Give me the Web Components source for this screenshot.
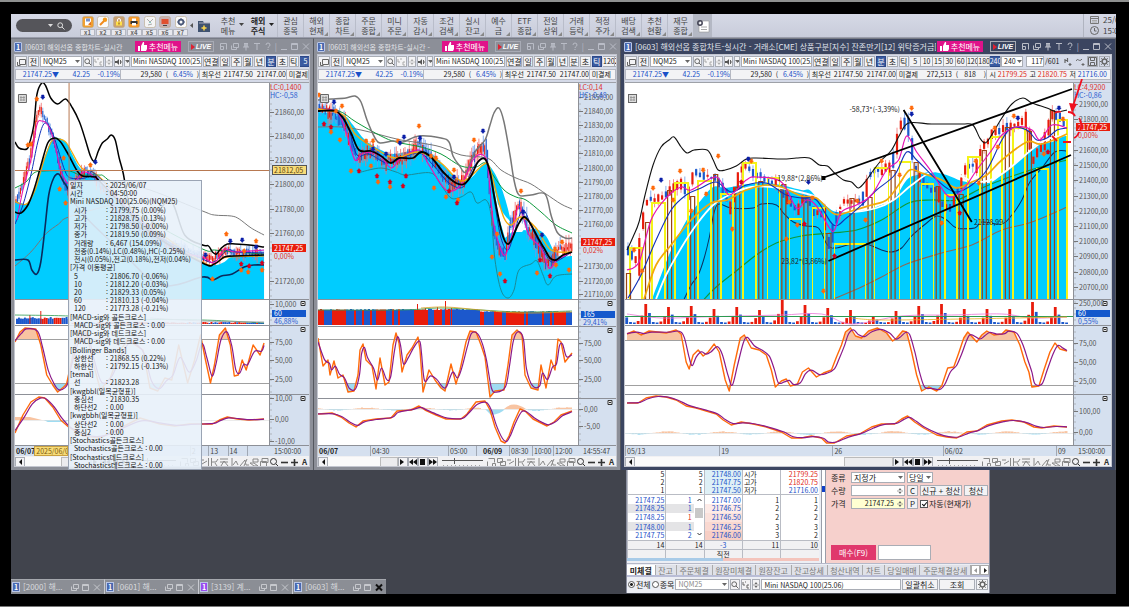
<!DOCTYPE html>
<html lang="ko">
<head>
<meta charset="utf-8">
<title>해외선옵 종합차트</title>
<style>
html{background:#000}
body{margin:0;box-sizing:border-box;min-height:100vh;border-top:2px solid #8e908f;border-bottom:1px solid #777;padding:12px 13px 12px 11px;background:#000;display:flex;flex-direction:column;
font:8px/10px "Noto Sans CJK KR",sans-serif;color:#222}
hts-desktop{flex:1}
</style>
</head>
<body>
<hts-toolbar></hts-toolbar>
<hts-desktop>
  <hts-window slot="w1" caption="[0603] 해외선옵 종합차트-실시간">
    <hts-chartbar period="분" ticks="5" active="5"></hts-chartbar>
    <hts-quote></hts-quote>
    <hts-chart kind="a"></hts-chart>
    <hts-databox slot="over"></hts-databox>
  </hts-window>
  <hts-window slot="w2" caption="[0603] 해외선옵 종합차트-실시간 -">
    <hts-chartbar period="틱" ticks="120,240"></hts-chartbar>
    <hts-quote></hts-quote>
    <hts-chart kind="b"></hts-chart>
  </hts-window>
  <hts-window slot="w3" focused caption="[0603] 해외선옵 종합차트-실시간 - 거래소[CME] 상품구분[지수] 잔존만기[12] 위탁증거금[1">
    <hts-chartbar period="분" ticks="5,10,15,30,60,120,180,240" active="240" full></hts-chartbar>
    <hts-quote full></hts-quote>
    <hts-chart kind="c"></hts-chart>
  </hts-window>
  <hts-taskbar slot="tasks"></hts-taskbar>
  <hts-order slot="order"></hts-order>
</hts-desktop>
<script>
const BASE = `<style>
*,:host{box-sizing:border-box}
:host{display:block;min-width:0}
button,input,select{font:inherit;color:inherit;margin:0;padding:0;border:1px solid #a9adb5;border-radius:0;background:#fff;min-width:0;outline:0;appearance:none}
button{background:#f3f3f5;text-align:center;white-space:nowrap;overflow:hidden}
svg{display:block}
</style>`;
const define = (name, render) => customElements.define(name, class extends HTMLElement {
  constructor(){ super(); this.attachShadow({mode:'open'}); }
  connectedCallback(){ this.shadowRoot.innerHTML = BASE + render(this); }
});
const icon = (w,h,body,extra='') => `<svg width="${w}" height="${h}" viewBox="0 0 ${w} ${h}" fill="none" stroke="currentColor" ${extra} aria-hidden="true">${body}</svg>`;
const LENS = icon(8,8,'<circle cx="3.2" cy="3.2" r="2.4"/><path d="M5 5l2.5 2.5"/>');
const DOWN = icon(5,4,'<path d="M0 0h5L2.5 3z" fill="currentColor" stroke="none"/>');
const SPIN = icon(6,8,'<path d="M1.5 3L3 1l1.5 2zM1.5 5L3 7l1.5-2z" fill="currentColor" stroke="none"/><path d="M0 4h6" stroke-width=".6"/>');
const GEAR = icon(9,9,'<circle cx="4.5" cy="4.5" r="2.4" stroke-width="1.5"/><path d="M4.5 0v1.5M4.5 7.500v1.500M0 4.500h1.500M7.500 4.500H9M1.300 1.300l1 1M6.700 6.700l1 1M1.300 7.700l1-1M6.700 2.300l1-1"/>');

/* ---------- main toolbar ---------- */
const QUICK = [
 ['#f0a030','<path d="M3 2.500h6v7H3z" fill="#fff"/><path d="M4 2.500h4v3H4z" fill="#7a92c8"/><path d="M6 8.500l3-3v4z" fill="#e07020"/>'],
 ['#fafafa','<circle cx="8" cy="3.800" r="2.200" fill="#f39a1c"/><path d="M7 5L3 9" stroke="#f08a1c" stroke-width="2"/>'],
 ['#c8a070','<path d="M3 5.500h6V9.500H3z" fill="#ffe04a"/><path d="M4.500 5.500V4a1.500 1.500 0 013 0v1.500" stroke="#fff"/><path d="M6 6.500v2" stroke="#7a4a10"/>'],
 ['#f59a2c','<path d="M2.500 5h7v3h-7z" fill="#333"/><path d="M4 2.500h4V5H4zM4 7h4v2.500H4z" fill="#fff"/>'],
 ['#f4f4f4','<path d="M3 3l3 3 3-3M4 9l4-1" stroke="#aaa"/><path d="M5.500 6l1 1" stroke="#2a9"/>'],
 ['#c8b0b0','<path d="M2.500 3h7v5h-7z" fill="#e05030"/><path d="M4 9.500h4" stroke="#444"/>'],
 ['#fafafa','<circle cx="6" cy="6" r="2.400" stroke="#4a5878" stroke-width="1.800"/><path d="M6 2v1M6 9v1M2 6h1M9 6h1" stroke="#4a5878"/>']];
const MENUS = ['관심|종목','해외|현재','종합|차트','주문|종합','미니|주문','자동|감시','조건|검색','실시|잔고','예수|금','ETF|종합','전일|상위','거래|등락','적정|주가','배당|검색','추천|현황','재무|종합'];
define('hts-toolbar', () => `<style>
:host{height:24px;background:linear-gradient(#d6d9e6,#c8ccda);color:#444;border-bottom:1px solid #9a9dab;overflow:hidden}
nav{display:flex;height:23px;align-items:stretch}
.find{display:flex;width:56px;height:13px;margin:5px 8px 0 5px;border-radius:7px;background:#55555a;color:#ddd;align-items:center;justify-content:flex-end;gap:4px;padding-right:7px}
.find input{flex:1;background:none;border:0}
.find button{background:none;border:0;width:8px;height:8px;color:#ddd}
.quick{display:flex;width:108px;justify-content:space-between;padding-top:1px;font-size:6px;line-height:5px;font-weight:bold;color:#666}
.quick button{background:none;border:0;width:15px;display:block}
.quick svg{margin:0 auto 1px}
.quick span{display:block;background:#e8e8ee;border:1px solid #b5b8c2;height:7px}
.fold{width:29px;display:flex;align-items:center;gap:4px;padding-left:1px}
.m{width:26px;border:0;border-left:1px solid #b9bdca;background:none;line-height:10px;position:relative}
.m.big{width:30px;border:0;padding-right:8px;text-align:center}
.m.b{font-weight:bold;color:#222}
.m i{position:absolute;right:1px;bottom:1px;border:2px solid transparent;border-right-color:#888;border-bottom-color:#888;width:0;height:0}
.m.big svg{position:absolute;right:3px;top:9px}
.set{width:19px;border:0;background:#b4b8c4;display:grid;place-items:center}
.when{margin-left:auto;width:33px;border-left:1px solid #b0b4c0;padding:0 0 0 6px;line-height:11px;overflow:hidden;white-space:nowrap}
.when div{display:flex;gap:4px;align-items:center;height:11px}
.when svg{flex:none}
</style><nav>
<div class="find"><input aria-label="화면 검색">${DOWN}<button aria-label="찾기">${LENS}</button></div>
<div class="quick">${QUICK.map((q,i)=>`<button>${icon(12,12,`<rect x=".5" y=".5" width="11" height="11" rx="2" fill="${q[0]}" stroke="#b9a88a" stroke-width=".6"/><g stroke="none">${q[1]}</g>`)}<span>x${i+1}</span></button>`).join('')}</div>
<div class="fold">${icon(4,7,'<path d="M4 1v5L1 3.500z" fill="#555" stroke="none"/>')}${icon(15,16,'<path d="M1 3h5l1 2h6v9H1z" fill="#3f5270" stroke="none"/><path d="M2 5h11" stroke="#aab"/><path d="M7 7.500v5M4.500 10h5" stroke="#ffd84a" stroke-width="1.500"/>')}</div>
<button class="m big">추천<br>메뉴${DOWN}</button><button class="m big b">해외<br>주식${DOWN}</button>
${MENUS.map((m,i)=>`<button class="m">${m.replace('|','<br>')}${i?'<i></i>':''}</button>`).join('')}
<button class="set" aria-label="메뉴 설정">${icon(14,14,'<path d="M4 2h9v11H3V6" fill="#fff" stroke="#999" stroke-width=".6"/><circle cx="4" cy="4" r="2.200" stroke="#445" stroke-width="1.500"/><path d="M5 8h6M5 10.500h6" stroke="#aaa"/>')}</button>
<div class="when"><div>${icon(9,9,'<path d="M.5 1.500h8v7h-8zM.5 3.500h8" stroke="#777"/><path d="M2 5.500h5M2 7h5" stroke="#aaa"/>')}25/0</div><div>${icon(9,9,'<circle cx="4.500" cy="4.500" r="4" stroke="#666"/><path d="M4.500 2v3h2" stroke="#666"/>')}15:0</div></div>
</nav>`);

/* ---------- desktop ---------- */
define('hts-desktop', () => `<style>
:host{background:#41444d;display:grid;grid-template-columns:303fr 307fr 495fr;grid-template-rows:432px 1fr;overflow:hidden}
slot{display:block;min-width:0}
.tasks{grid-column:1/3;align-self:end}
.order{padding-left:5px}
</style><slot name="w1"></slot><slot name="w2"></slot><slot name="w3"></slot><slot class="tasks" name="tasks"></slot><slot class="order" name="order"></slot>`);

const WINICONS = ['<path d="M.5 1.500h6v6M.5 1.500v6h3v-3h-3"/>','<path d="M2.500 1.500h5v4h-5zM.5 3.500v4h5v-2"/>','<path d="M2 1.500h4M1 5h6M4 5v3.500" /><path d="M3 1.500v3.500M5 1.500v3.500" stroke-width="1.600"/>','<path d="M1 1.500h6M4 1.500V8"/>','<path d="M2 3a2 2 0 114 0c0 1.500-2 1.500-2 3M4 7v1"/>'];
define('hts-window', el => `<style>
:host{height:100%;position:relative;padding:0 3px 3px;background:${el.hasAttribute('focused')?'#3b4560':'#8c8f98'};border-right:1px solid #55585f;border-top:1px solid #777b85;color:#222}
header{display:flex;align-items:center;height:15px;color:${el.hasAttribute('focused')?'#e2e5ee':'#e2e4e8'};white-space:nowrap}
b{background:#4a69b0;border:1px solid #b9c6e6;color:#fff;width:8px;height:10px;line-height:8px;text-align:center;border-radius:1px;margin-right:3px;font-size:7px;flex:none}
h2{flex:1;min-width:0;overflow:hidden;font:inherit;font-size:${el.hasAttribute('focused')?8:7}px;margin:0 1px 0 0}
.rec{background:#e0128a;border:0;color:#fff;width:46px;height:11px;display:flex;align-items:center;justify-content:center;gap:2px;flex:none}
.live{width:26px;height:11px;margin:0 6px 0 7px;flex:none;background:none;border:1px solid #a8abb5;color:#fff;font:italic bold 7px/9px "Liberation Sans",sans-serif;display:flex;align-items:center;justify-content:center;gap:1px}
.ic{display:flex;width:90px;justify-content:space-between;align-items:center;flex:none;color:#b9bcc6}
.ic button{background:none;border:0;width:8px;height:9px}
.body{background:#f3f3f5;border:1px solid #c3c6cf;height:413px;display:flex;flex-direction:column;overflow:hidden}
</style><header><b>1</b><h2>${el.getAttribute('caption')}</h2>
<button class="rec">${icon(9,9,'<path d="M0 4h2v5H0zM3 4l2-4c1 0 1.500.5 1 3h3v4l-1 2H3z" fill="#fff" stroke="none"/>')}추천메뉴</button>
<button class="live">${icon(4,6,'<path d="M0 0v6l4-3z" fill="#e02030" stroke="none"/>')}LIVE</button>
<div class="ic">${WINICONS.map((p,i)=>`<button aria-label="도구 ${i+1}">${icon(8,9,p)}</button>`).join('')}<span>|</span><button aria-label="최소화">${icon(8,9,'<path d="M1 7.500h6"/>')}</button><button aria-label="최대화">${icon(8,9,'<path d="M.5 1.500h6v6h-6zM.5 2.500h6"/>')}</button><button aria-label="닫기">${icon(8,9,'<path d="M1 1.500l6 6M7 1.500l-6 6"/>')}</button></div></header>
<div class="body"><slot></slot></div><slot name="over"></slot>`);

define('hts-chartbar', el => {
 const p=el.getAttribute('period'), t=el.getAttribute('ticks').split(','), a=el.getAttribute('active'), full=el.hasAttribute('full');
 return `<style>
:host{height:13px;flex:none;overflow:hidden;padding-top:1px;background:#d5dae8}
form{display:flex;gap:1px;height:11px;line-height:9px}
form>*{flex:none}
svg{color:#666}
button{display:grid;place-items:center}
.w12{width:12px}.w11{width:11px}.w10{width:9px}.w8{width:8px}.w6{width:6px}
.code{width:42px;display:flex;background:#fff;border:1px solid #a9adb5;align-items:center;font-size:7px}
.code input{border:0;flex:1;height:9px;padding-left:2px}.code svg{margin-right:1px}
.name{width:71px;padding-left:1px;font-size:7px}.link{width:16px}
.dim svg{color:#aaa}
.p{display:flex;gap:1px;width:79px}.p button{flex:1}
.t{display:flex;gap:1px;font-size:7px}.t button{flex:1;border-width:1px 0;box-shadow:1px 0 #a9adb5}
.on{background:#3a5aa0;color:#fff;border-color:#2c4888}
.iv{width:22px;display:flex;align-items:center;background:#fff;border:1px solid #a9adb5;font-size:7px}.iv select{border:0;flex:1;height:9px;padding-left:2px}
.cnt{width:18px;text-align:right;margin-left:2px;font-size:7px}.tot{font-size:7px;line-height:11px}
.tools{display:flex;gap:1px;margin-left:auto;padding-right:1px}.tools button{width:11px;border:0;background:none}.tools button+button+button{border:1px solid #a9adb5}
</style><form onsubmit="return false">
<button class="w12" aria-label="화면">${icon(9,8,'<path d="M2.500 1.500h6v5h-6zM.5 4v3.500h3"/>')}</button><button class="w11">전</button>
<span class="code"><input aria-label="종목코드" value="NQM25">${DOWN}</span>
<button class="w10" aria-label="검색">${LENS}</button><button class="w11 dim" aria-label="코드">${icon(9,8,'<path d="M1 1v3h2M8 4H6v3h2M3 1h2"/>')}</button><button class="w8 dim" aria-label="증감">${SPIN}</button>
<button class="w10" aria-label="소리">${icon(7,8,'<path d="M0 3h2l2-2v6L2 5H0z" fill="#555" stroke="none"/><path d="M5.500 2v4M7 4H5"/>')}</button><button class="w6" aria-label="목록">${DOWN}</button>
<input class="name" aria-label="종목명" value="Mini NASDAQ 100(25.06)"><button class="link">연결</button>
<span class="p">${[...'일주월년분초틱'].map(c=>`<button${c===p?' class="on"':''}>${c}</button>`).join('')}</span>
<span class="t" style="width:${Math.round(t.length*11.2)}px">${t.map(c=>`<button${c===a?' class="on"':''}>${c}</button>`).join('')}</span>
${full?`<span class="iv"><select aria-label="분 간격"><option>240</option></select>${DOWN}</span><input class="cnt" aria-label="표시 개수" value="117"><span class="tot">/601</span>
<span class="tools"><button aria-label="봉 추가">${icon(9,9,'<path d="M1 2v4M3.500 1v4M1 3.500h2M6 6v3M4.500 7.500h3" stroke-width="1.200"/>')}</button><button aria-label="지표 추가">${icon(9,9,'<path d="M0 4c2-4 3 2 6-2M7 6v3M5.500 7.500h3"/>')}</button><button aria-label="저장">${icon(9,9,'<path d="M.5.500h8v8h-8zM2.500.500v3h4v-3M2.500 8.500v-3h4v3"/>')}</button><button aria-label="설정">${GEAR}</button></span>`:''}
</form>`});

define('hts-quote', el => `<style>
:host{height:14px;flex:none;overflow:hidden;background:#d5dae8;padding-top:1px;font-size:7px}
div{display:flex;height:11px;line-height:9px;border:1px solid #b5b8c2;background:#f3f3f5;white-space:nowrap}
span{flex:none;text-align:right}
.blue{color:#1b50c8}.red{color:#e02818}.s{border-left:1px solid #b5b8c2}
</style><div><span class="blue" style="width:43px">21747.25▼</span><span class="blue" style="width:31px">42.25</span><span class="blue" style="width:30px">-0.19%</span>
<span class="s" style="width:42px">29,580</span><span style="width:6px">(</span><span class="blue" style="width:25px">6.45%</span><span style="width:6px">)</span><span class="s" style="width:22px">최우선</span><span style="width:32px">21747.50</span><span style="width:33px">21747.00</span><span class="s" style="width:22px">미결제</span>
${el.hasAttribute('full')?'<span style="width:34px">272,513</span><span style="width:6px">(</span><span style="width:18px">818</span><span style="width:10px">)</span><span class="s" style="width:10px">시</span><span class="red" style="width:31px">21799.25</span><span style="width:9px">고</span><span class="red" style="width:31px">21820.75</span><span style="width:9px">저</span><span class="blue" style="width:31px">21716.00</span>':''}</div>`);

/* ---------- chart drawing ---------- */
const pts = s => s.trim().split(' ').map(p=>p.split(',').map(Number));
const f = n => Math.round(n*10)/10;
function curve(P){
  let d=`M${P[0]}`;
  for(let i=0;i<P.length-1;i++){const a=P[i-1]||P[i],b=P[i],c=P[i+1],e=P[i+2]||c;
    d+=`C${f(b[0]+(c[0]-a[0])/6)} ${f(b[1]+(c[1]-a[1])/6)} ${f(c[0]-(e[0]-b[0])/6)} ${f(c[1]-(e[1]-b[1])/6)} ${c[0]} ${c[1]}`}
  return d}
const line=(s,c,w=1,x='')=>`<path d="${curve(pts(s))}" fill="none" stroke="${c}" stroke-width="${w}" ${x}/>`;
const area=(s,c,b=299)=>{const P=pts(s);return `<path d="${curve(P)}L${P.at(-1)[0]} ${b}L${P[0][0]} ${b}Z" fill="${c}"/>`};
const at=(P,x)=>{for(let i=1;i<P.length;i++)if(x<=P[i][0]){const a=P[i-1],b=P[i];return a[1]+(b[1]-a[1])*(x-a[0])/(b[0]-a[0])}return P.at(-1)[1]};
function rng(a){return()=>{a=a+0x6D2B79F5|0;let t=Math.imul(a^a>>>15,1|a);t=t+Math.imul(t^t>>>7,61|t)^t;return((t^t>>>14)>>>0)/4294967296}}
const RED='#e81c0c',BLUE='#1c58cc';
function candles(s,step,w,amp,seed){
  const P=pts(s),r=rng(seed);let o='';
  for(let x=P[0][0];x<=P.at(-1)[0];x+=step){
    const y=at(P,x),next=at(P,x+step),up=next<y-.5?r()<.8:next>y+.5?r()<.2:r()<.5,h=Math.abs(next-y)*.8+amp*(.15+r()*.7),t=y-h/2+(r()-.5)*amp*.5;
    const c=up?RED:BLUE;
    o+=`<path d="M${f(x)} ${f(t-amp*r()*.7)}V${f(t+h+amp*r()*.7)}" stroke="${up?'#f07070':'#6a9ae8'}" stroke-width=".8"/><path d="M${f(x)} ${f(t)}V${f(t+h)}" stroke="${c}" stroke-width="${w}"/>`}
  return o}
function marks(s,c,dir){return pts(s).map(([x,y])=>`<path transform="translate(${x} ${y})${dir<0?' scale(1 -1)':''}" d="M0-2.500L2.200 0H1.200V2H-1.200V0H-2.200Z" fill="${c}" stroke="${c}" stroke-width=".5"/>`).join('')}
const CR='#d8001c';
function osc(s,hi,lo,id,dx=1.5){
  const P=pts(s),Q=P.map((p,i)=>{const a=P[i-1]||p,b=P[i+1]||p;return [f(Math.min(p[0]+(i?dx:0),P.at(-1)[0])),f(a[1]*.2+p[1]*.66+b[1]*.14)]});
  const d='M'+P.map(p=>p.join(' ')).join('L'),e=y=>`${d}L${P.at(-1)[0]} ${y}L${P[0][0]} ${y}Z`;
  return (hi?`<clipPath id="h${id}"><path d="M0 300H1200V${hi}H0z"/></clipPath><clipPath id="l${id}"><path d="M0 ${lo}H1200V460H0z"/></clipPath>
<path d="${e(hi)}" fill="#f8c4a2" clip-path="url(#h${id})"/><path d="${e(lo)}" fill="#9fdcf2" clip-path="url(#l${id})"/><path d="M0 ${hi+.5}H1200M0 ${lo+.5}H1200" stroke="#a0a0a0"/>`:'')
  +`<path d="${d}" fill="none" stroke="#ff6a0a" stroke-width="1.400" stroke-linejoin="round"/><path d="${curve(Q)}" fill="none" stroke="#8a1a8a" stroke-width="1.200"/>`}
function hist(x0,x1,y,seed,amp,step=2){const r=rng(seed);let o='',v=0;for(let x=x0;x<x1;x+=step){v=Math.sin(x/9+seed)*amp*(.6+.5*r());o+=`<path d="M${f(x)} ${y}v${f(-v)}" stroke="${v>0?'#f8c4a2':'#9fdcf2'}" stroke-width="${step}"/>`}return o}
function vol(x0,x1,base,h,v,seed,w){const r=rng(seed);let o='',c=RED;for(let x=x0;x<x1;x+=w){if(r()<.55)c=r()<.52?RED:BLUE;const y=h+r()*v;o+=`<path d="M${x+w/2} ${base}v${f(-y)}" stroke="${c}" stroke-width="${w}"/>`}return o}
const frame=(x0,x1,ys)=>`<path d="${ys.map(y=>`M${x0} ${y+.5}H${x1}`).join('')}" stroke="#8d9097"/>`;
const box=(x,y)=>`<path d="M${x+.5} ${y+.5}h8v8h-8z" fill="#ddd" stroke="#666"/><path d="M${x+2} ${y+3.500}h5M${x+2} ${y+6}h5M${x+3} ${y+2}v5M${x+6} ${y+2}v5" stroke="#888" stroke-width=".7"/>`;

const CH={};
CH.a={x0:14,w:256,ax:40,panes:[299,325,394],svg(){return `
${area('14,200 20,203 27,203 35,187 43,160 51,140 58,138 66,143 72,155 78,166 84,172 92,175 98,180 120,200 160,235 203,262 216,265 225,262 235,256 265,256','#00ccff')}
${line('14,266 30,252 45,234 58,224 68,217 110,205','#777',1)}
${candles('15,200 20,192 26,170 31,150 36,118 40,108 46,122 52,135 58,160 63,182 68,192 75,180 85,170 95,178 120,215 160,240 203,258 215,258 228,251 240,253 265,252',1.5,1,9,77)}
${line('14,260 27,260 31,270 36,274 40,262 44,230 48,195 53,178 58,174 63,182 67,188 72,200 90,222 120,250 160,285 203,277 213,280 222,276 233,274 245,267 255,265 265,265','#0a2a5c',1.6)}
${line('14,188 25,182 33,173 43,171 68,171 80,175 98,175 108,180 150,220 203,249 215,250 235,252 265,254','#0c9a3c',1)}
${line('14,201 20,204 27,203 35,188 43,161 51,141 58,139 66,143 78,164 84,170 98,176 150,225 203,262 216,263 228,257 265,256','#f2a80c',1.2)}
${line('14,224 22,205 30,175 37,142 43,124 49,127 56,145 64,170 70,178 85,178 95,174 150,230 203,259 216,261 228,250 238,252 265,253','#1030b8',1)}
${line('16,220 22,190 30,160 36,125 41,121 47,125 53,140 60,170 68,184 76,180 90,174 140,220 175,250 203,257 215,263 225,249 235,252 265,250','#e614b4',1.1)}
${line('14,142 18,148 26,149 29,142 33,125 36,95 41,83 45,86 50,98 57,104 65,99 72,108 79,122 85,140 90,156 94,161 98,151 102,143 107,139 111,135 115,140 119,158 123,173 128,200 135,225 150,225 170,200 185,235 203,245 209,246 213,252 217,254 222,248 228,244 236,244 250,245 265,247','#000',1.5)}
${line('14,212 20,213 27,205 33,190 40,166 47,143 54,138 60,142 68,155 76,170 82,176 95,177 100,182 150,232 203,263 215,264 225,257 235,256 265,255','#000',1.6)}
${line('108,180 150,190 203,211 215,215 232,216 240,219 252,228 265,235','#777',1)}
${marks('36,99 30,144 27,145 63,158 59,189 90,165 65,203 213,279 242,270 227,234 257,241 245,251 263,270 249,272','#ff6a0a',1)}${marks('42,97 95,162 206,255 231,241 243,240 257,247','#0a1ea8',-1)}${marks('242,264 263,263 250,266',CR,1)}
${box(17,94)}
${vol(71,265,324,1,1,3,2)}${vol(15,69,324,5,2,9,2)}<path d="M40 324v-13M29 324v-9" stroke="${RED}"/>${line('14,315 68,316 110,319 203,320 265,323','#2c9a50',.8)}${line('150,318 203,321 265,322','#999',.8)}
${osc('14,342 19,332 24,328 35,329 40,345 46,375 52,385 57,392 63,387 66,384 69,370 78,330 86,332 92,360 100,390 110,378 120,350 128,340 135,345 143,350 150,388 158,391 165,378 172,380 179,345 188,383 195,360 201,335 206,360 211,383 215,365 220,335 226,328 231,345 235,376 239,375 243,360 247,370 254,345 261,355 265,343',339,383,'a')}
<path d="M14 420v-3h15l12 3z" fill="#f8c4a2"/><path d="M43 420l4 2h18l4-2z" fill="#9fdcf2"/><path d="M14 420.500H270" stroke="#ddd" stroke-width=".6"/>
${osc('14,433 22,415 30,402 38,397 44,398 52,407 60,420 68,427 82,436 100,438 120,428 140,418 160,424 175,426 190,424 202,424 213,424 220,420 228,417 238,419 250,420 265,419')}
<path d="M68.500 83V445M14 170.500H270" stroke="#b87850"/>`},
 axis:[['21860,00',112],['21840,00',136],['21820,00',160],['21800,00',184],['21780,00',209],['21760,00',233],['21720,00',281],['10,000',304],['75,00',342],['50,00',360],['25,00',379],['10,00',398],['0,00',419],['-10,00',441]],
 lc:'LC:0,1400',hc:'HC:-0,58',red:248,pct:['0,00%',256],vb:['60',313,'46,88%'],cross:170,time:'15:00:00',
 dates:[[21,'06/07',1],[37,'2025/06/07',2],[132,''],[20,'2'],[21,'13'],[21,'14'],[24,'']],thumb:30};
CH.b={x0:317,w:260,ax:38,panes:[299,326,398],svg(){return `
${area('317,112 342,115 352,125 364,140 380,150 392,154 418,150 432,155 445,168 458,180 470,178 484,163 490,170 500,195 510,222 523,230 535,229 545,236 556,255 571,256','#00ccff')}
<path d="M491 172L497 214 504 238 511 232 521 232 526 226 518 205 509 222Z" fill="#fff"/><path d="M488 165Q501 180 510 222Q502 215 497 204Z" fill="#00ccff"/>
${candles('317,108 335,114 345,128 352,150 356,156 372,152 385,163 395,158 403,160 418,144 430,158 440,172 450,185 463,180 472,158 480,148 486,150 488,185 492,225 498,250 504,255 511,220 519,202 527,228 535,240 545,262 550,262 557,250 571,248',1.45,1,13,2)}
${line('360,172 380,168 395,172 405,175 430,173 440,185 450,198 460,197 470,192 476,203 485,200 490,215 494,260 500,290 507,298 513,290 518,270 530,264 536,261 542,275 547,285 555,276 571,274','#1c8a96',1)}
${line('317,127 340,127 360,130 380,135 400,140 420,143 440,147 460,155 480,157 490,160 500,170 515,178 530,184 545,194 560,204 571,209','#777',1)}
${line('317,109 338,111 355,122 380,136 395,142 420,147 440,154 460,166 475,167 484,163 492,175 503,190 515,197 525,200 540,212 555,225 571,233','#0c9a3c',1)}
${line('317,100 331,99 345,98 354,96 360,102 366,120 374,138 379,143 392,141 402,142 418,136 440,138 448,142 452,156 458,165 465,172 474,152 484,140 489,125 493,113 498,108 503,122 509,155 513,180 518,195 530,195 544,194 550,215 556,232 564,238 571,238','#777',1.5)}
${line('317,110 338,112 348,130 356,155 368,154 385,163 395,160 418,153 432,165 448,183 462,187 472,168 482,158 488,168 494,205 500,238 507,250 514,230 522,210 532,230 545,255 553,262 571,252','#1030b8',1)}
${line('317,109 336,112 346,135 354,160 362,153 378,155 390,168 400,158 418,150 428,165 445,190 460,185 472,160 482,155 487,168 492,220 500,250 505,254 511,235 518,206 528,235 540,248 548,268 556,260 571,252','#e614b4',1.2)}
${line('317,109 342,115 355,135 380,152 395,158 418,152 440,163 455,178 465,180 482,165 488,166 496,195 503,218 510,225 520,217 535,228 550,250 571,252','#f2a80c',1.4)}
${line('317,111 334,111 342,118 350,133 358,150 370,151 380,156 390,163 398,158 412,158 420,152 430,157 443,173 455,183 463,184 470,176 477,162 484,159 489,172 493,195 499,225 503,239 507,244 511,239 517,225 523,217 529,223 537,238 543,248 549,258 555,260 562,255 571,252','#000',1.8)}
${marks('318,95 341,106 335,111 418,126 365,141 372,141 397,141 473,140 520,191 430,156 435,158 350,171 330,132 370,166 377,182 389,187 339,140 433,188 445,197 453,170 457,200 491,257 499,274 496,234 561,242 555,265 568,270 554,249 536,273','#ff6a0a',-1)}${marks('333,102 326,101 403,137 419,138 399,143 385,154 482,131 522,212 453,177 541,235 372,149','#0a1ea8',-1)}${marks('323,124 330,127 358,171 376,176 389,182 405,176 402,186 448,191 456,203 504,281 539,260 549,276',CR,1)}
${box(319,94)}
${vol(317,479,325,15,1,21,2)}${vol(479,571,325,13,1,12,2)}<path d="M416.500 325v-21M444.500 325v-24M424.500 325v-17M450.500 325v-17M436.500 325v-18" stroke="${RED}"/>${line('317,310 400,310 440,308 480,310 520,312 571,311','#2c9a50',.8)}${line('420,308 445,307 480,310 520,313 571,312','#d8a020',.8)}
${osc('317,338 322,366 327,360 329,375 333,361 337,378 342,375 347,392 353,391 357,375 359,350 362,344 365,360 371,366 375,389 379,358 384,385 388,382 392,345 395,333 398,343 401,372 406,355 411,348 417,337 419,350 422,392 428,370 434,380 440,388 444,391 450,364 455,384 459,370 465,342 469,331 475,332 480,345 484,357 489,397 494,391 503,390 507,365 511,335 516,330 521,335 524,375 530,388 537,390 540,365 545,388 550,360 554,370 557,339 560,342 564,362 571,353',339,383,'b')}
${hist(317,480,409,5,1.5)}<path d="M484 409L490 415Q500 414 504 409Z" fill="#9fdcf2"/><path d="M503 409Q512 400 525 409Z" fill="#f8c4a2"/>${hist(526,571,409,8,2)}<path d="M317 409.500H577" stroke="#ddd" stroke-width=".6"/>
${osc('317,414 331,413 340,417 348,423 355,427 362,421 375,419 390,418 396,411 410,410 418,406 424,410 435,415 445,419 460,419 466,414 475,402 484,401 489,410 494,427 500,441 504,443 508,436 513,422 519,409 524,411 532,419 540,423 546,426 553,422 560,415 571,411')}`},
 axis:[['21850,00',97],['21840,00',111],['21830,00',125],['21820,00',139],['21810,00',153],['21800,00',168],['21790,00',182],['21780,00',196],['21770,00',210],['21760,00',224],['21730,00',266],['21720,00',281],['21710,00',294],['75,00',343],['50,00',360],['25,00',379],['0,00',409],['-5,00',426]],
 lc:'LC:0,14',hc:'HC:-0,48',red:242,pct:['0,02%',250],vb:['165',314,'29,41%'],time:'14:55:47',
 dates:[[52,'06/07',1],[78,'04:30'],[28,'05:00'],[6,''],[27,'06/09',1],[23,'08:30'],[21,'10:00'],[25,'12:00']],thumb:18};
CH.c={x0:624,w:447,ax:38,panes:[299,325,394],svg(){
 const br='626,273 645,222 667,190 690,196 713,174 735,187 758,181 781,184 803,197 826,233 849,198 867,197 890,170 913,162 935,186 958,194 981,150 1004,127 1026,131 1049,110';
 const ye='629,248,12 651,203,13 674,183,13 697,181,13 720,194,12 742,163,13 766,178,12 788,219,12 811,208,12 833,244,31 873,168,14 898,162,11 920,184,12 943,195,12 966,157,12 989,137,11 1011,128,12 1035,169,11 1056,120,9';
 let v='';for(let k=0;k<20;k++){const x=622+k*22.7-7.6,T=[12,20,17,18,15,17,14,24,19,16,14,8,13,18,20,15,15,15,22,17][k];[T*.15,T*.42,T,T*.55,2,1.5].forEach((h,i)=>{const X=x+i*3.78;if(X>624&&X<1068)v+=`<path d="M${f(X)} 324v${f(-h)}" stroke="${i<3?RED:BLUE}" stroke-width="2.800"/>`})}
 return `
${area('651,299 660,275 670,250 680,230 690,213 700,200 712,187 724,188 740,185 760,183 780,185 800,190 808,190 815,197 826,207 835,212 850,212 865,210 880,205 892,200 905,180 915,175 930,172 945,175 960,181 975,183 990,182 1005,170 1020,158 1035,145 1050,142 1065,134','#00ccff')}
${line('683,299 690,285 697,275 703,258 708,238 713,212 718,204 730,208 752,208 760,204 775,205 782,213 792,222 805,226 817,228 826,245 835,248 850,244 865,244 880,250 890,252 900,248 910,236 925,223 935,216 945,220 955,228 973,228 980,222 1000,224 1010,215 1020,200 1028,182 1040,168 1053,152 1065,151','#0a3060',1)}
${line('703,299 715,287 735,271 755,255 775,243 800,236 830,233 855,230 880,220 907,203 930,200 955,200 980,188 1005,178 1035,168 1065,160','#0c9a3c',1.2)}
${line('832,299 860,287 880,277 905,264 940,253 970,245 1000,230 1030,222 1065,207','#8a6a58',1.1)}
${candles('627,252 638,262 641,225 646,200 655,198 665,195 680,182 688,195 693,172 705,176 715,177 722,190 730,208 737,180 742,162 755,175 775,185 785,195 795,212 803,198 813,210 824,220 828,250 834,222 842,203 855,200 862,200 870,170 882,172 893,160 899,125 905,120 909,140 914,170 925,185 937,195 942,210 950,205 957,192 965,165 975,165 982,145 990,135 1003,127 1015,127 1025,120 1031,160 1037,150 1045,140 1048,118 1056,115 1065,125',3.78,2.2,9,5)}
<g fill="none" stroke="#f4f418" stroke-width="1.600" shape-rendering="crispEdges">${pts(ye).map(([x,y,w])=>`<path d="M${x} 299V${y}h${w}V299"/>`).join('')}</g>
<g fill="none" stroke="#9a4414" stroke-width="1.200">${pts(br).map(([x,y])=>`<path d="M${x-.5} 299V${y+.5}h4V299"/>`).join('')}</g>
${line('655,299 665,275 680,248 695,225 712,205 730,194 750,187 770,187 790,190 815,197 830,207 850,212 875,208 892,200 910,185 930,172 950,172 975,182 1000,174 1040,142 1065,135','#fff',1.8)}
${line('643,299 655,265 670,245 690,220 710,203 726,200 745,190 765,185 780,187 800,196 815,198 833,214 850,211 870,205 885,200 897,185 908,170 920,173 940,180 955,188 970,182 985,175 1000,160 1025,142 1040,144 1065,134','#f2a80c',1.7)}
${line('627,298 640,275 655,240 670,210 685,195 700,188 715,182 730,192 745,185 765,183 785,195 800,198 815,200 832,225 845,218 860,205 875,190 893,175 905,152 915,160 930,175 945,188 955,192 970,185 985,170 1000,140 1010,128 1025,130 1035,140 1045,138 1055,130 1065,128','#1030b8',1.1)}
${line('626,270 638,262 650,220 665,198 680,187 690,190 715,177 728,195 745,180 755,177 780,182 795,208 805,200 815,206 828,228 833,230 840,212 855,205 870,195 885,170 897,160 905,136 915,152 930,172 945,195 955,195 965,185 975,170 990,150 1000,135 1015,127 1030,130 1038,140 1050,125 1065,128','#e614b4',1.2)}
${line('626,250 632,237 638,222 644,195 652,165 660,147 668,140 673,137 680,147 686,153 693,150 706,150 712,160 717,170 724,170 735,166 745,159 755,158 781,159 795,158 808,158 818,165 826,166 833,173 842,180 850,182 857,188 865,180 872,170 880,160 890,150 898,135 907,123 930,124 960,124 971,125 978,138 983,143 988,138 1000,118 1010,104 1021,98 1030,103 1045,108 1055,112 1065,110','#111',1.1)}
<path d="M821 178L1070 89M827 261L1069 155M902 110L970 222" stroke="#000" stroke-width="1.800"/><path d="M820 176h4v4h-4z" fill="#000"/>
${marks('652,188 679,171 702,170 717,156 750,161 705,194 633,250 641,271 731,229 690,211 672,200 785,239 796,225 822,291 811,198 856,201 864,220 880,161 788,202 898,175 910,108 940,223 974,161 996,147 1012,116 977,183 993,128 1042,154 1061,119','#ff6a0a',-1)}${marks('660,180 747,159 807,182 910,114 1016,118 1057,108','#0a1ea8',-1)}${marks('740,182 803,224 833,256 958,213 1046,152',CR,1)}
${box(627,94)}
${v}${line('626,314 660,318 700,317 740,316 780,315 820,314 850,324 900,316 950,315 1000,314 1030,318 1065,317','#e878d8',.8)}<path d="M624 316.500H1071" stroke="#2c9a50"/>${line('850,318 880,320 960,319 1065,317','#e8b020',.8)}
${osc('626,334 633,331 640,335 648,331 665,333 675,330 680,334 685,362 688,369 692,355 697,350 702,356 707,352 713,344 718,352 724,380 728,391 733,365 739,338 743,335 750,348 758,350 765,355 770,370 774,387 780,381 785,379 789,386 796,384 801,372 807,368 815,377 822,373 830,370 835,357 840,345 844,332 849,328 854,336 860,338 867,331 876,328 885,333 891,341 895,338 901,331 905,332 910,352 915,375 920,391 927,387 935,391 940,386 946,368 952,367 957,353 962,338 966,332 975,342 980,335 985,331 992,335 1000,334 1004,330 1012,332 1018,345 1023,362 1027,372 1030,387 1037,386 1042,370 1048,352 1053,343 1058,349 1065,351',340,385,'c',3)}
${hist(626,1065,433,3,1.8,3)}<path d="M624 433.500H1071" stroke="#ddd" stroke-width=".6"/>
${osc('626,403 637,403 645,398 655,396 665,397 675,400 685,406 695,408 705,411 715,414 722,420 730,425 740,422 752,424 765,427 780,432 790,438 800,438 810,436 820,438 825,443 833,443 845,436 858,434 870,427 880,424 893,424 900,419 906,416 913,422 922,428 935,435 945,437 955,438 965,432 975,431 985,425 1000,421 1010,420 1022,422 1032,427 1040,428 1052,426 1065,427',0,0,'',2)}`},
 axis:[['21900,00',104],['21800,00',119],['21600,00',150],['21500,00',165],['21400,00',180],['21300,00',196],['21200,00',211],['21100,00',226],['21000,00',241],['20900,00',256],['20800,00',272],['20700,00',287],['250,000',303],['75,00',343],['50,00',362],['25,00',381],['100,00',411],['0,00',432]],
 lc:'LC:4,9200',hc:'HC:-0,86',red:127,pct:['0,00%',135],vb:['60',313,'0,55%'],time:'15:00:00',
 dates:[[94,'05/13'],[113,'19'],[110,'26'],[113,'06/02'],[17,'09']],thumb:49,
 notes:[['-58,73*(-3,39%)',848,109],['19,88*(2,86%)',776,178],['23,82*(3,86%)',780,261],['21128,99',972,222]]};
const TOOLS=['<path d="M1.500.500h6v4M.5 3.500v5h4M5.500 5.500h3v3h-3z"/>','<path d="M.5.500h5v4h-5zM3.500 3.500h5v4h-5z"/>','<path d="M0 2h4M0 8.500h8.500V0M2 6l5-3"/>','<path d="M1.500 0v9M1 4h5l2-3M5 5l2 3"/>','<path d="M0 1h8M1 8l3-5 4 5M0 4h8"/>','<path d="M2 0v8M3 7l3-4 2 4"/>','<path d="M0 8l5-6 1 5h3M4 8l3-7"/>','<path d="M3 1h5v3H3zM0 5h4l4 3H4z"/>','<path d="M2 .5h6v4H2zM.5 3.500h6v5h-6z"/>','<circle cx="3.500" cy="3.500" r="3"/><path d="M6 6l3 3"/>','<path d="M1 4.500h7" stroke-width="1.600"/>','<path d="M1 4.500h7M4.500 1v7" stroke-width="1.600"/>'];
define('hts-chart', el => {const c=CH[el.getAttribute('kind')],e=c.ax,T=(x,y,s,col='#555',m='')=>`<text x="${x}" y="${y+3}" fill="${col}" ${m}>${s}</text>`;
 return `<style>
:host{flex:1;border-top:1px solid #9ea1a8}
.g{display:grid;grid-template-columns:minmax(0,1fr) ${e}px;position:relative;background:#fff}
.plot{position:relative;height:362px;overflow:hidden}
.plot svg{width:100%;height:100%}
.ax{background:#d5e0ef;font-size:7px}
.n{position:absolute;line-height:8px;font-size:7px;color:#222;white-space:nowrap}
.d,.t{display:grid;background:#d5e0ef;border-top:1px solid #8d9097;height:11px;line-height:10px;font-size:7px;color:#444;overflow:hidden;white-space:nowrap}
.d span{border-left:1px solid #a0a8b4;overflow:hidden;padding-left:1px}
.d .b{font-weight:bold;color:#222;border:0}.d .y{background:#f8dc78;color:#7a5a10;border:1px solid #c8a040;line-height:8px}
.t{padding-left:5px}
.s{display:flex;height:12px;align-items:center;background:#f1f1f3;color:#111}
.s button{width:10px;height:10px;display:grid;place-items:center;flex:none}
.track{flex:1;min-width:0;height:10px;background:#fafafa;display:flex;justify-content:flex-end}
.track i{width:${c.thumb}px;background:#ececee;border:1px solid #bbb;flex:none}
.sl{flex:none;width:41px;height:9px;margin:0 4px}
.ic{display:flex;width:129px;flex:none;justify-content:space-between;color:#888;align-items:center;font-weight:bold}
.s .ic button{border:0;background:none;width:9px}
.s .ic button:nth-child(n+10){color:#333}
.mark{position:absolute;right:-4px;top:-4px;pointer-events:none}
</style><div class="g"><div class="plot"><svg viewBox="${c.x0} 83 ${c.w} 362" preserveAspectRatio="none" aria-hidden="true">${c.svg()}${frame(c.x0,c.x0+c.w,c.panes)}</svg>
${(c.notes||[]).map(n=>`<span class="n" style="left:${Math.round((n[1]-c.x0)/c.w*1000)/10}%;top:${n[2]-87}px">${n[0]}</span>`).join('')}</div>
<svg class="ax" width="${e}" height="362" viewBox="0 83 ${e} 362"><path d="M.5 83V445" stroke="#8d9097"/>${Array.from({length:60},(_,i)=>`<path d="M1 ${86+i*6}h2" stroke="#999" stroke-width=".6"/>`).join('')}${frame(0,e,c.panes)}
${c.axis.map(([s,y])=>`<path d="M1 ${y+.5}h4" stroke="#777"/>${T(6,y,s)}`).join('')}
${T(1,87,c.lc,'#e03028')}${T(1,95,c.hc,'#2a5ad0')}
<rect x="3" y="${c.red-4}" width="34" height="8" fill="#e81c0c"/>${T(5,c.red,'21747,25','#fff')}${T(5,c.pct[1],c.pct[0],'#e03028')}
<rect x="3" y="${c.vb[1]-3}" width="34" height="7" fill="#1458cc"/>${T(5,c.vb[1],c.vb[0],'#fff')}${T(5,c.vb[1]+8,c.vb[2],'#2a5ad0')}
${c.cross?`<rect x="3.500" y="165.500" width="34" height="9" fill="#f8dc78" stroke="#555"/>${T(5,170,'21812,05','#5a4410')}`:''}
${c.panes.map(y=>`<path d="M${e-8} ${y+2.500}h4v4h-4z" stroke="#333" fill="#eee"/><path d="M${e-7} ${y+4.500}h2" stroke="#333"/>`).join('')}</svg>
<div class="d" style="grid-template-columns:${c.dates.map(d=>`minmax(0,${d[0]}fr)`).join(' ')}">${c.dates.map(d=>`<span class="${d[2]==1?'b':d[2]==2?'y':''}">${d[1]}</span>`).join('')}</div><div class="t">${c.time}</div>
${el.getAttribute('kind')==='c'?`<svg class="mark" width="66" height="72" viewBox="1047 79 66 72" fill="none" stroke="#f01020" stroke-width="1.800"><path d="M1080 79L1071 106"/><path d="M1067 103l8 1-5 9z" fill="#f01020" stroke="none"/><path d="M1053 113q3-2 6-1M1066 112q5 0 7 4M1077 118q4 6 1 12M1077 132q-2 5-5 6M1069 142h-8M1055 141l-5-5"/></svg>`:''}</div>
<div class="s"><button aria-label="왼쪽">${icon(5,6,'<path d="M4 0v6L1 3z" fill="#111" stroke="none"/>')}</button><span class="track"><i></i></span>
${['<path d="M1 0v6l4-3z"/>','<path d="M4 0v6L0 3zM8 0v6L4 3z"/>','<path d="M1 0h5v6H1z"/>','<path d="M0 0v6l4-3zM4 0v6l4-3z"/>'].map((p,i)=>`<button aria-label="재생 ${i+1}">${icon(8,6,`<g fill="#111" stroke="none">${p}</g>`)}</button>`).join('')}
${icon(41,9,'<path d="M0 2.500h41M12.500 0v6" stroke="#555"/><path d="M1 8h40" stroke="#555" stroke-dasharray="1 3"/>','class="sl"')}
<span class="ic">${TOOLS.map((p,i)=>`<button aria-label="그리기 ${i+1}">${icon(9,9,p)}</button>`).join('')}<button>A</button></span></div>`});

const DATA=['일자|: 2025/06/07','시간|: 04:50:00','Mini NASDAQ 100(25.06)(NQM25)',' 시가|: 21799.75 (0.00%)',' 고가|: 21828.75 (0.13%)',' 저가|: 21798.50 (-0.00%)',' 종가|: 21819.50 (0.09%)',' 거래량|: 6,467 (154.09%)',' 전종(0.14%),LC(0.48%),HC(-0.25%)',' 전시(0.05%),전고(0.18%),전저(0.04%)','[가격 이동평균]',' 5|: 21806.70 (-0.06%)',' 10|: 21812.20 (-0.03%)',' 20|: 21829.33 (0.05%)',' 60|: 21810.13 (-0.04%)',' 120|: 21773.28 (-0.21%)','[MACD-sig와 골든크로스]',' MACD-sig와 골든크로스 : 0.00','[MACD-sig와 데드크로스]',' MACD-sig와 데드크로스 : 0.00','[Bollinger Bands]',' 상한선|: 21868.55 (0.22%)',' 하한선|: 21792.15 (-0.13%)','[temal]',' 선|: 21823.28','[kwgbbl(일목균형표)]',' 중심선|: 21830.35',' 하단선2|: 0.00','[kwgbbh(일목균형표)]',' 상단선2|: 0.00',' 중심2|: 0.00','[Stochastics골든크로스]',' Stochastics골든크로스 : 0.00','[Stochastics데드크로스]',' Stochastics데드크로스 : 0.00'];
define('hts-databox', () => `<style>
:host{position:absolute;left:57px;top:141px;bottom:0;width:134px;background:rgba(232,241,250,.9);border:1px solid #9aa4b4;color:#111;padding:0 1px;font-size:7px}
dl{margin:0;height:100%;display:grid;grid-auto-rows:minmax(0,1fr)}
div{display:flex;white-space:nowrap;line-height:8px}
dt,dd{margin:0}.k{width:36px}.i{padding-left:4px}
</style><dl>${DATA.map(l=>{const[a,b]=l.split('|'),i=a[0]===' '?' i':'';return `<div><dt class="${b?'k':''}${i}">${a.trim()}</dt>${b?`<dd>${b}</dd>`:''}</div>`}).join('')}</dl>`);

/* ---------- minimised windows ---------- */
define('hts-taskbar', () => `<style>
:host{width:375px;max-width:100%}
div{display:flex;height:15px}
section{flex:1;display:flex;align-items:center;gap:3px;background:#8b8e95;border-left:1px solid #c8cad0;border-top:1px solid #a5a8ae;color:#d8dade;padding:0 3px 0 1px;white-space:nowrap}
section:first-child{border-left:0}
b{background:#4a69b0;border:1px solid #b9c6e6;color:#fff;width:8px;height:10px;line-height:8px;text-align:center;flex:none;font-size:7px}
.v{background:#9a4af0}span{flex:1}
button{background:none;border:0;width:8px;height:9px;color:#c6c8cd}.k{color:#111}
</style><div>${[['[2000] 해...'],['[0601] 해...'],['[3139] 계...','v'],['[0603] 해...','','k']].map(([t,v,k])=>`<section><b class="${v||''}">1</b><span>${t}</span><button aria-label="복원">${icon(8,9,WINICONS[1])}</button><button aria-label="최대화">${icon(8,9,'<path d="M.5 1.500h6v6h-6zM.5 2.500h6"/>')}</button><button class="${k||''}" aria-label="닫기">${icon(8,9,'<path d="M1 1.500l6 6M7 1.500l-6 6"/>',k?'stroke-width="2"':'')}</button></section>`).join('')}</div>`);

/* ---------- order window ---------- */
const ASK=[['5','5','21748.00','시가','21799.25','r'],['2','2','21747.75','고가','21820.75','r'],['1','1','21747.50','저가','21716.00','u']];
const BID=[['21747.25','1','21747.00','1','1'],['21748.25','1','21746.75','2','2'],['21748.25','1','21746.50','2','2'],['21748.00','1','21746.25','3','3'],['21747.75','2','21746.00','3','2']];
define('hts-order', () => `<style>
:host{width:364px;max-width:100%;height:123px;background:#eceef4;border:solid #8b8fa0;border-width:0 1px 0 1px;display:flex;flex-direction:column;overflow:hidden}
.top{display:flex;height:93px}
.book{width:194px;position:relative;flex:none;font-size:7px}
table{border-collapse:collapse;width:192px;table-layout:fixed;background:#fff;height:88px;line-height:8px}
td{padding:0 1px;text-align:right;border:0 solid #b9bcc4;border-left-width:1px;white-space:nowrap;height:8px}
.b td{height:9px}
.u{color:#1b50c8}.r{color:#e02818}.l{text-align:left}.c{text-align:center}
.sp td{border-top-width:1px}.g{background:#e4e4e6}.sum td{background:#f1f1f3;border-top-width:1px}
.b td.q{padding-right:12px}
.bar{height:3px;width:192px;background:linear-gradient(90deg,#a8cbe8 50%,#f4c4bc 50%)}
.sb{position:absolute;left:67px;top:25px;width:10px;height:44px;background:#fff;display:flex;flex-direction:column;align-items:center;justify-content:space-between;padding:3px 0}
.sb i{width:8px;height:10px;background:#c8c8c8;margin-bottom:8px}
.rail{width:5px;border:solid #9a9da8;border-width:0 1px;position:relative;flex:none;background:#fff}.rail i{position:absolute;left:0;top:16px;width:3px;height:6px;background:#1040c8}
form{flex:1;background:#f6d0cc;padding:2px 2px 0 5px;position:relative;display:flex;flex-direction:column;gap:2px}
.row{display:flex;height:11px;gap:2px;align-items:center;line-height:9px}
.row>*{flex:none;height:11px}
.row>label:first-child{width:18px;line-height:11px}
.f{display:flex;align-items:center;background:#fff;border:1px solid #a9adb5;width:54px}.f>*{border:0}.f input,.f select{flex:1;height:9px;padding:0 2px;background:none;text-align:right}.f select{text-align:left}
.f.w{width:26px}.f.w select{padding:0 1px}
.f.y{background:#ffffd2;font-size:7px}.f svg{margin:0 1px;color:#666}
.ck{display:flex;align-items:center;gap:1px;line-height:11px}.ck input{width:8px;height:8px;border:1px solid #555;position:relative}
.ck input:checked::after{content:"";position:absolute;left:2px;top:0;width:2px;height:4px;border:solid #111;border-width:0 1px 1px 0;transform:rotate(40deg)}
.buy{margin-top:auto;padding-bottom:3px;height:18px}
.buy .go{width:45px;height:15px;background:#e0386c;border:0;color:#fff}.buy input{width:53px;height:15px}
.tabs{display:flex;height:14px;border-top:1px solid #b5b8c8;border-bottom:2px solid #b9bdd6;padding-top:1px}
.tabs button{border:0;border-right:1px solid #aaa;background:#dfe1e8;color:#777;flex:auto;line-height:9px}.tabs .on{background:#fff;color:#222;font-weight:bold}
.tabs .ar{flex:none;width:9px;background:#fff;border:1px solid #aaa;display:grid;place-items:center;color:#333}
.foot{display:flex;gap:1px;padding:2px 1px 0;height:16px;line-height:9px}
.foot>*{height:11px;flex:none}
.foot label{display:flex;align-items:center}.foot label input{width:7px;height:7px;border:1px solid #555;border-radius:4px;margin-right:1px}
.foot label input:checked{background:radial-gradient(#222 35%,#fff 45%)}
.foot .f{width:54px;font-size:7px}.foot .f input{text-align:left;color:#888}.foot button{display:grid;place-items:center}
.foot .nm{flex:1;padding-left:2px;font-size:7px}
.foot svg{color:#666}
</style><div class="top"><div class="book"><table>
${ASK.map((r,i)=>`<tr class="a"><td>${r[0]}</td><td>${r[1]}</td><td class="u" style="background:#def0f6">${r[2]}</td><td class="l">${r[3]}</td><td class="${r[5]}">${r[4]}</td></tr>`).join('')}
${BID.map((r,i)=>`<tr class="b ${i?'':'sp'}"><td class="u ${i%2?'g':''}">${r[0]}</td><td class="q ${i==2?'r':'u'} ${i%2?'g':''}">${r[1]}</td><td class="u" style="background:${['#fff','#fdebe7','#fbe2dc','#f9d8d0','#f7cec4'][i]}">${r[2]}</td><td>${r[3]}</td><td>${r[4]}</td></tr>`).join('')}
<tr class="sum"><td>14</td><td>14</td><td class="u c">-3</td><td>11</td><td>10</td></tr><tr class="sum"><td></td><td></td><td class="c">직전</td><td></td><td></td></tr></table><div class="bar"></div>
<div class="sb">${icon(5,3,'<path d="M.5 3l2-2 2 2" stroke="#333"/>')}<i></i>${icon(5,3,'<path d="M.5 0l2 2 2-2" stroke="#333"/>')}</div></div>
<div class="rail"><i></i></div>
<form onsubmit="return false"><div class="row"><label for="kind">종류</label><span class="f"><select id="kind"><option>지정가</option></select>${DOWN}</span><span class="f w"><select aria-label="기간"><option>당일</option></select>${DOWN}</span></div>
<div class="row"><label for="qty">수량</label><span class="f"><input id="qty">${SPIN}</span><button style="width:11px">C</button><button style="width:42px">신규 + 청산</button><button style="width:24px">청산</button></div>
<div class="row"><label for="price">가격</label><span class="f y"><input id="price" value="21747.25">${SPIN}</span><button style="width:11px">P</button><label class="ck"><input type="checkbox" checked>자동(현재가)</label></div>
<div class="row buy"><button class="go">매수(F9)</button><input aria-label="주문 메모"></div></form></div>
<div class="tabs">${['미체결','잔고','주문체결','원장미체결','원장잔고','잔고상세','청산내역','차트','당일매매','주문체결상세'].map((t,i)=>`<button class="${i?'':'on'}">${t}</button>`).join('')}<button class="ar" aria-label="이전 탭">${icon(4,5,'<path d="M3 0v5L0 2.500z" fill="#999" stroke="none"/>')}</button><button class="ar" aria-label="다음 탭">${icon(4,5,'<path d="M1 0v5l3-2.500z" fill="#222" stroke="none"/>')}</button></div>
<div class="foot"><label><input type="radio" name="r" checked>전체</label><label><input type="radio" name="r">종목</label><span class="f"><input aria-label="종목코드" value="NQM25">${DOWN}</span><button style="width:10px" aria-label="검색">${LENS}</button><button style="width:10px" aria-label="코드">${icon(8,8,'<path d="M1 1v3h2M7 4H5v3h2M3 1h1"/>')}</button><button style="width:8px" aria-label="증감">${SPIN}</button><input class="nm" aria-label="종목명" value="Mini NASDAQ 100(25.06)"><button style="width:36px">일괄취소</button><button style="width:36px">조회</button><button style="width:12px" aria-label="설정">${GEAR}</button></div>`);
</script>
</body>
</html>
